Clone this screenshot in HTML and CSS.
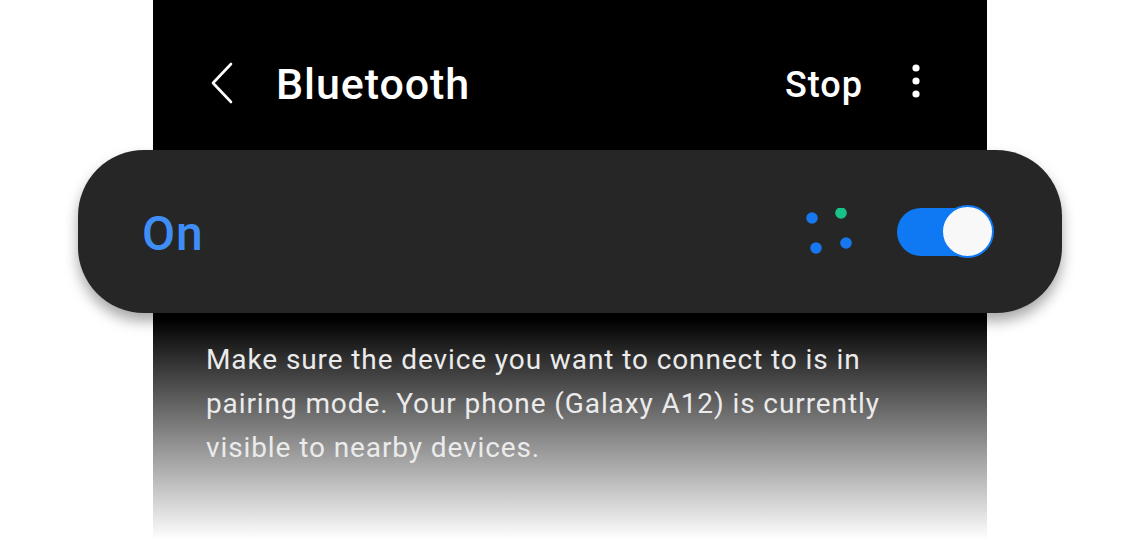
FILE: index.html
```html
<!DOCTYPE html>
<html>
<head>
<meta charset="utf-8">
<link rel="stylesheet" href="styles.css">
</head>
<body>
<div class="phone">
  <header class="appbar">
    <svg class="back" width="30" height="44" viewBox="0 0 30 44"><path d="M21 3 L3 22 L21 41" fill="none" stroke="#fff" stroke-width="2.6" stroke-linecap="round" stroke-linejoin="round"/></svg>
    <h1 class="title">Bluetooth</h1>
    <span class="stop">Stop</span>
    <svg class="more" width="10" height="36" viewBox="0 0 10 36"><circle cx="5" cy="4" r="3.6" fill="#fff"/><circle cx="5" cy="17" r="3.6" fill="#fff"/><circle cx="5" cy="30" r="3.6" fill="#fff"/></svg>
  </header>
  <div class="switchbar">
    <span class="on">On</span>
    <svg class="spinner" width="50" height="46" viewBox="0 0 50 46"><circle cx="6" cy="10" r="5.8" fill="#1677ee"/><circle cx="35" cy="5" r="5.8" fill="#17c38a"/><circle cx="10" cy="40" r="5.8" fill="#1677ee"/><circle cx="40" cy="35" r="5.8" fill="#1677ee"/></svg>
    <div class="toggle"><div class="thumb"></div></div>
  </div>
  <p class="desc">Make sure the device you want to connect to is in pairing mode. Your phone (Galaxy A12) is currently visible to nearby devices.</p>
</div>
</body>
</html>
```
FILE: styles.css
```css
html, body { margin: 0; padding: 0; background: #fff; }
body { width: 1140px; height: 540px; overflow: hidden; font-family: Roboto, "Noto Sans", sans-serif; }
.phone {
  margin-left: 153px;
  width: 834px;
  height: 540px;
  background: linear-gradient(to bottom, #000 0, #000 318px, #fff 540px);
}
.appbar {
  height: 150px;
  box-sizing: border-box;
  padding: 18px 66px 0 57px;
  display: flex;
  align-items: center;
  color: #fff;
}
.back { flex: none; margin-top: -2px; }
.title { margin: 0 0 0 36px; font-size: 43px; font-weight: 500; flex: 1; letter-spacing: 0.9px; }
.stop { font-size: 36px; font-weight: 500; margin-right: 48px; letter-spacing: 1px; margin-top: 2px; }
.more { flex: none; margin-top: -4px; }
.switchbar {
  margin: 0 -75px;
  height: 163px;
  border-radius: 66px;
  background: #262626;
  box-shadow: 0 8px 14px rgba(0,0,0,0.35);
  display: flex;
  align-items: center;
  padding: 0 70px 0 64px;
  position: relative;
}
.on { color: #3e8ef5; font-size: 48px; font-weight: 500; flex: 1; margin-top: 3px; letter-spacing: 1px; }
.spinner { margin-right: 41px; margin-top: -2px; }
.toggle {
  width: 95px; height: 48px; border-radius: 24px; background: #0f79f3;
  display: flex; align-items: center; justify-content: flex-end;
}
.thumb {
  width: 49px; height: 49px; border-radius: 50%; background: #f8f8f9;
  border: 2px solid #0f79f3; box-sizing: content-box; margin-right: -2px;
}
.desc {
  margin: 0;
  padding: 25px 70px 0 53px;
  font-size: 28px;
  line-height: 44px;
  letter-spacing: 0.9px;
  color: #ebebeb;
}
```
